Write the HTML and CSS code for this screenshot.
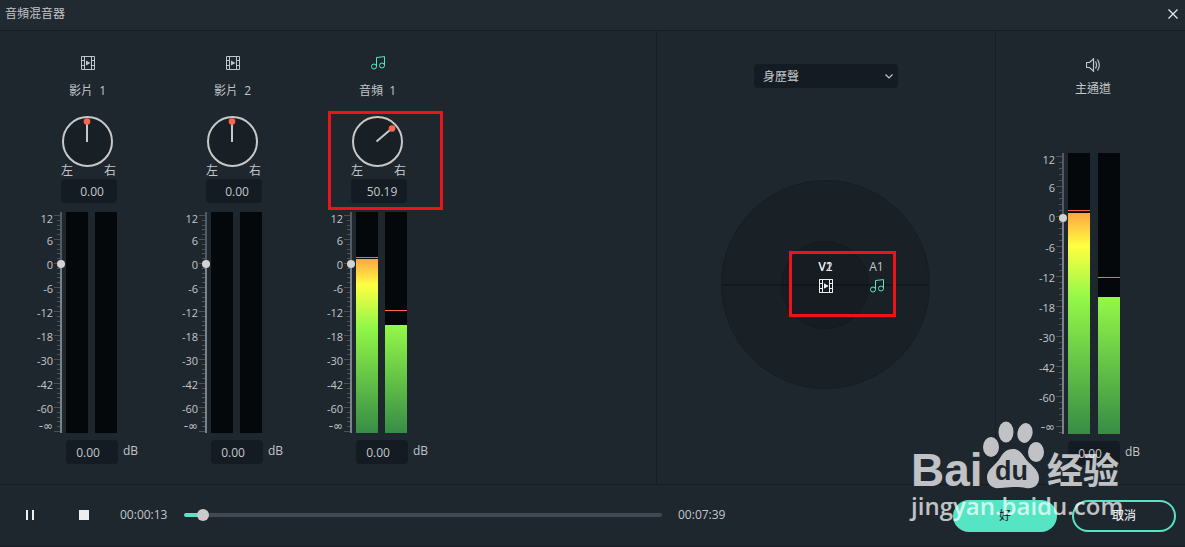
FILE: index.html
```html
<!DOCTYPE html>
<html lang="zh-Hant">
<head>
    <meta charset="UTF-8">
    <meta name="viewport" content="width=device-width, initial-scale=1.0">
    <title>音頻混音器</title>
    <link rel="stylesheet" href="styles.css">
</head>
<body>

    <svg class="sprite" aria-hidden="true">
        <symbol id="film" viewBox="0 0 14 14">
            <path d="M.5 .5h13v13H.5zM3.5 .5v13M10.5 .5v13M.5 4.5h3M.5 9.5h3M10.5 4.5h3M10.5 9.5h3" fill="none" stroke="currentColor"/>
            <path d="M5 4.5L9.5 7L5 9.5z" fill="currentColor"/>
        </symbol>
        <symbol id="note" viewBox="0 0 14 14">
            <path d="M5.5 10.5V1.5L13.5 .6V9.5" fill="none" stroke="currentColor"/>
            <circle cx="3" cy="10.5" r="2.5" fill="none" stroke="currentColor"/>
            <circle cx="11" cy="9.5" r="2.5" fill="none" stroke="currentColor"/>
        </symbol>
        <symbol id="speaker" viewBox="0 0 14 14">
            <path d="M.5 4.5h3L7.5 .8v12.4L3.5 9.5h-3z" fill="none" stroke="currentColor" stroke-width="1.2"/>
            <path d="M9.5 3.5q2 3.5 0 7M11.5 1.5q3.6 5.5 0 11" fill="none" stroke="currentColor" stroke-width="1.2"/>
        </symbol>
    </svg>

    <header class="titlebar">
        <h1>音頻混音器</h1>
        <button class="close" aria-label="關閉">
            <svg viewBox="0 0 10 10" width="10" height="10"><path d="M.5 .5l9 9M9.5 .5l-9 9" stroke="#e6e8ea" stroke-width="1.3"/></svg>
        </button>
    </header>

    <main class="mixer">
        <section class="tracks">
            <div class="strip">
                <svg class="icon"><use href="#film"/></svg>
                <h2>影片&nbsp; 1</h2>
                <div class="pan">
                    <svg class="knob" viewBox="0 0 51 51">
                        <circle class="dial" cx="25.5" cy="25.5" r="24.5"/>
                        <path class="needle" d="M25 26V8"/>
                        <circle class="dot" cx="25" cy="5.5" r="3.3"/>
                    </svg>
                    <div class="sides"><span>左</span><span>右</span></div>
                    <input class="field" type="text" value="0.00" aria-label="影片 1 聲像">
                </div>
                <div class="meter">
                    <div class="scale"><span>12</span><span>6</span><span>0</span><span>-6</span><span>-12</span><span>-18</span><span>-30</span><span>-42</span><span>-60</span><span>-∞</span></div>
                    <div class="fader"><input type="range" min="0" max="213" value="165" aria-label="影片 1 音量"></div>
                    <div class="bar"></div>
                    <div class="bar"></div>
                </div>
                <label class="gain"><input class="field" type="text" value="0.00"><span>dB</span></label>
            </div>

            <div class="strip">
                <svg class="icon"><use href="#film"/></svg>
                <h2>影片&nbsp; 2</h2>
                <div class="pan">
                    <svg class="knob" viewBox="0 0 51 51">
                        <circle class="dial" cx="25.5" cy="25.5" r="24.5"/>
                        <path class="needle" d="M25 26V8"/>
                        <circle class="dot" cx="25" cy="5.5" r="3.3"/>
                    </svg>
                    <div class="sides"><span>左</span><span>右</span></div>
                    <input class="field" type="text" value="0.00" aria-label="影片 2 聲像">
                </div>
                <div class="meter">
                    <div class="scale"><span>12</span><span>6</span><span>0</span><span>-6</span><span>-12</span><span>-18</span><span>-30</span><span>-42</span><span>-60</span><span>-∞</span></div>
                    <div class="fader"><input type="range" min="0" max="213" value="165" aria-label="影片 2 音量"></div>
                    <div class="bar"></div>
                    <div class="bar"></div>
                </div>
                <label class="gain"><input class="field" type="text" value="0.00"><span>dB</span></label>
            </div>

            <div class="strip">
                <svg class="icon audio"><use href="#note"/></svg>
                <h2>音頻&nbsp; 1</h2>
                <div class="pan">
                    <svg class="knob" viewBox="0 0 51 51">
                        <circle class="dial" cx="25.5" cy="25.5" r="24.5"/>
                        <path class="needle" d="M24.5 25.5L38 14"/>
                        <circle class="dot" cx="40" cy="12.5" r="3.3"/>
                    </svg>
                    <div class="sides"><span>左</span><span>右</span></div>
                    <input class="field" type="text" value="50.19" aria-label="音頻 1 聲像">
                    <div class="mark mark-pan"></div>
                </div>
                <div class="meter">
                    <div class="scale"><span>12</span><span>6</span><span>0</span><span>-6</span><span>-12</span><span>-18</span><span>-30</span><span>-42</span><span>-60</span><span>-∞</span></div>
                    <div class="fader"><input type="range" min="0" max="213" value="165" aria-label="音頻 1 音量"></div>
                    <div class="bar"><div class="level" style="height: 174px"></div><div class="peak" style="bottom: 175px"></div></div>
                    <div class="bar"><div class="level" style="height: 108px"></div><div class="peak" style="bottom: 122px"></div></div>
                </div>
                <label class="gain"><input class="field" type="text" value="0.00"><span>dB</span></label>
            </div>
        </section>

        <section class="surround">
            <select class="mode" aria-label="聲道模式">
                <option>身歷聲</option>
            </select>
            <div class="stage">
                <div class="inner"></div>
                <div class="source v1"><span>V1</span><svg class="icon"><use href="#film"/></svg></div>
                <div class="source v2"><span>V2</span><svg class="icon"><use href="#film"/></svg></div>
                <div class="source a1"><span>A1</span><svg class="icon audio"><use href="#note"/></svg></div>
                <div class="mark mark-stage"></div>
            </div>
        </section>

        <section class="master">
            <svg class="icon"><use href="#speaker"/></svg>
            <h2>主通道</h2>
            <div class="meter">
                <div class="scale"><span>12</span><span>6</span><span>0</span><span>-6</span><span>-12</span><span>-18</span><span>-30</span><span>-42</span><span>-60</span><span>-∞</span></div>
                <div class="fader"><input type="range" min="0" max="273" value="212" aria-label="主音量"></div>
                <div class="bar"><div class="level" style="height: 221px"></div><div class="peak" style="bottom: 223px"></div></div>
                <div class="bar"><div class="level" style="height: 137px"></div><div class="peak" style="bottom: 156px"></div></div>
            </div>
            <label class="gain"><input class="field" type="text" value="0.00"><span>dB</span></label>
        </section>
    </main>

    <footer class="transport">
        <div class="playback">
            <button class="play" aria-label="暫停">
                <svg viewBox="0 0 10 10" width="10" height="10"><path d="M1 0h2v10H1zM7 0h2v10H7z" fill="#eceeef"/></svg>
            </button>
            <button class="play" aria-label="停止">
                <svg viewBox="0 0 10 10" width="10" height="10"><path d="M0 0h10v10H0z" fill="#eceeef"/></svg>
            </button>
            <span class="time">00:00:13</span>
            <input class="seek" type="range" min="0" max="459" value="13" style="--played: 4%" aria-label="播放位置">
            <span class="time">00:07:39</span>
        </div>
        <div class="actions">
            <button class="btn primary">好</button>
            <button class="btn">取消</button>
        </div>
    </footer>

    <div class="watermark">
        <div class="brand">
            <span class="bai">Bai</span>
            <div class="paw">
                <svg viewBox="0 0 62 68" width="62" height="68">
                    <ellipse cx="9" cy="26" rx="8" ry="10"/>
                    <ellipse cx="24" cy="11" rx="7.5" ry="10.5"/>
                    <ellipse cx="43" cy="12" rx="7.5" ry="10" transform="rotate(12 43 12)"/>
                    <ellipse cx="54" cy="31" rx="8" ry="10"/>
                    <path d="M31 28c6 0 9 4 12 9 4 6 14 11 14 20 0 8-6 11-13 10-5-1-8-1-13-1s-8 1-13 1C10 68 5 63 5 56c0-8 9-12 13-19 3-5 6-9 13-9z"/>
                </svg>
                <span>du</span>
            </div>
            <span class="jy">经验</span>
        </div>
        <div class="site">jingyan.baidu.com</div>
    </div>

</body>
</html>
```

FILE: styles.css
```css
* {
    box-sizing: border-box;
}
body {
    margin: 0;
    min-height: 100vh;
    display: flex;
    flex-direction: column;
    position: relative;
    background: #1e262e;
    color: #c3c6c9;
    font-family: "Open Sans", "Noto Sans CJK TC", sans-serif;
    font-size: 12px;
    line-height: 16px;
    border-bottom: 1px solid #171d24;
}
h1, h2 {
    margin: 0;
    font-size: 12px;
    font-weight: normal;
}
button, input, select {
    font: inherit;
    color: inherit;
    margin: 0;
    border: none;
}
button {
    cursor: pointer;
    background: none;
    padding: 0;
}
.sprite {
    display: none;
}
.icon {
    display: block;
    width: 14px;
    height: 14px;
}
.audio {
    color: #55e5c5;
}

/* title bar */
.titlebar {
    display: flex;
    justify-content: space-between;
    align-items: center;
    height: 31px;
    padding: 0 6px 2px 5px;
    background: #212931;
    border-bottom: 1px solid #171d24;
}
.close {
    display: flex;
    padding: 1px;
}

/* panels */
.mixer {
    flex: 1;
    display: flex;
}
.tracks {
    flex: 1;
    display: flex;
    padding: 25px 0 20px 15px;
}
.strip {
    width: 145px;
}
.strip .icon {
    margin: 0 auto;
}
.strip h2 {
    margin: 13px 0 17px;
    text-align: center;
}

/* pan knob */
.pan {
    position: relative;
    width: 56px;
    margin: 0 0 9px 46px;
}
.knob {
    display: block;
    width: 51px;
    height: 51px;
    margin-left: 1px;
}
.dial {
    fill: #182026;
    stroke: #c8c8c8;
    stroke-width: 2;
}
.needle {
    stroke: #c8c8c8;
    stroke-width: 2;
}
.dot {
    fill: #ff624f;
}
.sides {
    display: flex;
    justify-content: space-between;
    margin-top: -2px;
    padding: 0 1px 2px 0;
    line-height: 12px;
}
.field {
    display: block;
    height: 24px;
    background: #141b22;
    border-radius: 4px;
    text-align: center;
}
.pan .field {
    width: 56px;
    padding: 0 0 0 6px;
}

/* level meter */
.meter {
    --step: 24px;
    --size: 221px;
    display: flex;
    height: var(--size);
}
.scale {
    width: 39px;
    padding-right: 1px;
    display: flex;
    flex-direction: column;
    font-size: 11px;
    text-align: right;
}
.scale span {
    height: var(--step);
    line-height: var(--step);
}
.scale span:first-child {
    height: 17px;
    line-height: 14px;
}
.scale span:last-child {
    height: 14px;
    line-height: 14px;
    margin-top: -2px;
    font-family: "DejaVu Sans", sans-serif;
    font-size: 12px;
}
.fader {
    width: 12px;
    padding-left: 3px;
    background:
        linear-gradient(#4b525b 1px, transparent 1px) 0 3px / 6px var(--step) repeat-y,
        linear-gradient(#4b525b 1px, transparent 1px 5px, #4b525b 5px 6px, transparent 6px 10px, #4b525b 10px 11px, transparent 11px 14px, #4b525b 14px 15px, transparent 15px 19px, #4b525b 19px 20px, transparent 20px) 3px 3px / 3px var(--step) repeat-y;
}
.fader input {
    -webkit-appearance: none;
    appearance: none;
    display: block;
    writing-mode: vertical-lr;
    direction: rtl;
    width: 8px;
    height: 100%;
    background: linear-gradient(#535a63 24%, #7d8289 24%) center / 2px 100% no-repeat;
}
.fader input::-webkit-slider-thumb {
    -webkit-appearance: none;
    width: 8px;
    height: 8px;
    border-radius: 50%;
    background: #d2d2d2;
}
.bar {
    position: relative;
    width: 22px;
    display: flex;
    align-items: flex-end;
    background: #05080a;
}
.bar + .bar {
    margin-left: 7px;
}
.level {
    width: 100%;
    background: linear-gradient(#ff7a4a, #ff9a42 20%, #ffff42 33%, #92f748 52%, #378c46) bottom / 100% var(--size) no-repeat;
}
.peak {
    position: absolute;
    left: 0;
    right: 0;
    height: 1px;
    background: #ff6650;
}
.gain {
    display: flex;
    gap: 5px;
    margin: 7px 0 0 51px;
}
.gain .field {
    width: 52px;
    padding: 0 8px 0 0;
}
.gain span {
    line-height: 22px;
}

/* stereo stage */
.surround {
    width: 339px;
    padding-top: 33px;
    border-left: 1px solid #171d24;
    display: flex;
    flex-direction: column;
    align-items: center;
}
.mode {
    -webkit-appearance: none;
    appearance: none;
    width: 144px;
    height: 24px;
    padding: 2px 9px 0;
    border-radius: 4px;
    background: #141b22 url("data:image/svg+xml,%3Csvg xmlns='http://www.w3.org/2000/svg' width='8' height='5'%3E%3Cpath d='M.5 .5L4 4L7.5 .5' fill='none' stroke='%23c3c6c9' stroke-width='1.2'/%3E%3C/svg%3E") right 5px center no-repeat;
}
.stage {
    position: relative;
    width: 209px;
    height: 209px;
    margin: 92px 2px 0 0;
    border: 1px solid #161d23;
    border-radius: 50%;
    background: linear-gradient(#12181d, #12181d) center / 100% 2px no-repeat, #192026;
}
.inner {
    width: 88px;
    height: 88px;
    margin: 60px auto;
    border: 1px solid #141a20;
    border-radius: 50%;
    background: linear-gradient(#10151a, #10151a) center / 100% 2px no-repeat, #161c22;
}
.source {
    position: absolute;
    top: 78px;
    width: 16px;
    display: flex;
    flex-direction: column;
    align-items: center;
    gap: 4px;
}
.v1, .v2 {
    left: 96px;
    color: #eceeef;
}
.a1 {
    left: 147px;
}
.a1 span {
    color: #c3c6c9;
}

/* highlight frames */
.mark {
    position: absolute;
    border: 3px solid #ee131b;
    pointer-events: none;
}
.mark-pan {
    top: -5px;
    left: -23px;
    width: 115px;
    height: 99px;
}
.mark-stage {
    top: 70px;
    left: 67px;
    width: 107px;
    height: 66px;
}

/* master channel */
.master {
    width: 190px;
    padding: 27px 16px 19px 21px;
    border-left: 1px solid #171d24;
}
.master .icon {
    margin: 0 auto;
}
.master h2 {
    padding: 9px 0 56px;
    text-align: center;
}
.master .meter {
    --step: 30px;
    --size: 281px;
}
.master .fader {
    background:
        linear-gradient(#4b525b 1px, transparent 1px) 0 3px / 6px var(--step) repeat-y,
        linear-gradient(#4b525b 1px, transparent 1px) 3px 3px / 3px 6px repeat-y;
}
.master .scale span:first-child {
    height: 20px;
}
.master .scale span:last-child {
    margin-top: 7px;
}
.master .bar + .bar {
    margin-left: 8px;
}

/* transport */
.transport {
    display: flex;
    align-items: center;
    height: 62px;
    padding: 0 9px 0 25px;
    border-top: 1px solid #171d24;
}
.playback {
    flex: 1;
    display: flex;
    align-items: center;
    padding-bottom: 2px;
}
.play {
    display: flex;
    margin-right: 44px;
}
.play + .time {
    margin-left: -13px;
}
.time {
    width: 48px;
}
.seek {
    -webkit-appearance: none;
    appearance: none;
    flex: 1;
    min-width: 80px;
    height: 12px;
    margin: 0 16px;
    background: none;
}
.seek::-webkit-slider-runnable-track {
    height: 4px;
    border-radius: 2px;
    background: linear-gradient(to right, #55e5c5 var(--played), #434952 var(--played));
}
.seek::-webkit-slider-thumb {
    -webkit-appearance: none;
    width: 12px;
    height: 12px;
    margin-top: -4px;
    border-radius: 50%;
    background: #cacaca;
}
.actions {
    display: flex;
    gap: 15px;
    margin-left: 227px;
}
.btn {
    width: 104px;
    height: 32px;
    border: 2px solid #55e5c5;
    border-radius: 16px;
    color: #fff;
}
.btn.primary {
    background: #55e5c5;
    color: #10151a;
}

/* watermark */
.watermark {
    position: absolute;
    right: 62px;
    bottom: 23px;
    width: 212px;
    color: #fff;
    opacity: 0.72;
    pointer-events: none;
}
.brand {
    display: flex;
    align-items: flex-end;
    height: 68px;
}
.bai {
    width: 71px;
    font: bold 46px/46px "Liberation Sans", sans-serif;
    height: 42px;
}
.paw {
    position: relative;
    height: 68px;
}
.paw svg {
    display: block;
    fill: #fff;
}
.paw span {
    position: absolute;
    left: 13px;
    top: 37px;
    font: bold 27px/27px "Liberation Sans", sans-serif;
    color: #1e262e;
}
.jy {
    margin-left: 3px;
    font: bold 36px/42px "Noto Sans CJK SC", sans-serif;
}
.site {
    font-size: 24px;
    font-weight: 600;
    line-height: 34px;
}
```
